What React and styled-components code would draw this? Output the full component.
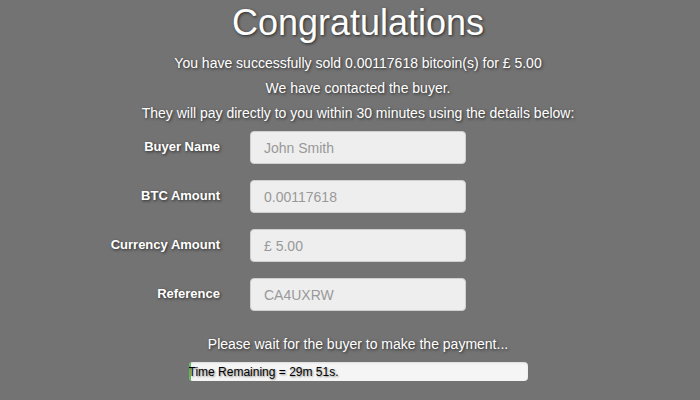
import React from 'react'
import styled, { createGlobalStyle } from 'styled-components'

const GlobalStyle = createGlobalStyle`
  html, body {
    margin: 0;
    padding: 0;
    background: #737373;
  }
  body {
    font-family: 'Liberation Sans', Arial, sans-serif;
    color: #ffffff;
  }
`

const Page = styled.div`
  width: 716px;
  display: flex;
  flex-direction: column;
  align-items: center;
  text-shadow: 1px 1px 3px rgba(0, 0, 0, 0.65);
`

const Title = styled.h1`
  margin: 0 0 5px 0;
  font-size: 36px;
  font-weight: normal;
  line-height: 46px;
`

const Line = styled.p`
  margin: 0;
  font-size: 14px;
  line-height: 25px;
`

const Form = styled.div`
  align-self: flex-start;
  margin-top: 5px;
  display: grid;
  grid-template-columns: 220px 216px;
  column-gap: 30px;
  row-gap: 16px;
  align-items: center;
`

const Label = styled.label`
  text-align: right;
  font-size: 13px;
  font-weight: bold;
  margin-top: -3px;
`

const Field = styled.div`
  box-sizing: border-box;
  height: 33px;
  padding: 0 13px;
  display: flex;
  align-items: center;
  background: #eeeeee;
  border: 1px solid #cfcfcf;
  border-radius: 4px;
  color: #999999;
  font-size: 14px;
  text-shadow: none;
`

const Wait = styled.p`
  margin: 23px 0 0 0;
  font-size: 14px;
  line-height: 20px;
`

const Progress = styled.div`
  margin-top: 8px;
  width: 339px;
  height: 19px;
  display: flex;
  align-items: center;
  background: #f5f5f5;
  border-radius: 4px;
  overflow: hidden;
  box-shadow: inset 0 1px 2px rgba(0, 0, 0, 0.1);
`

const Bar = styled.div`
  align-self: stretch;
  background: #5cb85c;
  flex-shrink: 0;
`

const BarText = styled.span`
  margin-left: -2px;
  color: #000000;
  font-size: 12px;
  text-shadow: 1px 1px 2px rgba(0, 0, 0, 0.45);
  white-space: nowrap;
`

const details = [
  ['Buyer Name', 'John Smith'],
  ['BTC Amount', '0.00117618'],
  ['Currency Amount', '£ 5.00'],
  ['Reference', 'CA4UXRW'],
]

const App = () => {
  const progress = 0.6

  return (
    <Page>
      <GlobalStyle />
      <Title>Congratulations</Title>
      <Line>You have successfully sold 0.00117618 bitcoin(s) for £ 5.00</Line>
      <Line>We have contacted the buyer.</Line>
      <Line>They will pay directly to you within 30 minutes using the details below:</Line>

      <Form>
        {details.map(([label, value]) => (
          <React.Fragment key={label}>
            <Label>{label}</Label>
            <Field>{value}</Field>
          </React.Fragment>
        ))}
      </Form>

      <Wait>Please wait for the buyer to make the payment...</Wait>
      <Progress>
        <Bar style={{ width: `${progress}%`, minWidth: 2 }} />
        <BarText>Time Remaining = 29m 51s.</BarText>
      </Progress>
    </Page>
  )
}

export default App
